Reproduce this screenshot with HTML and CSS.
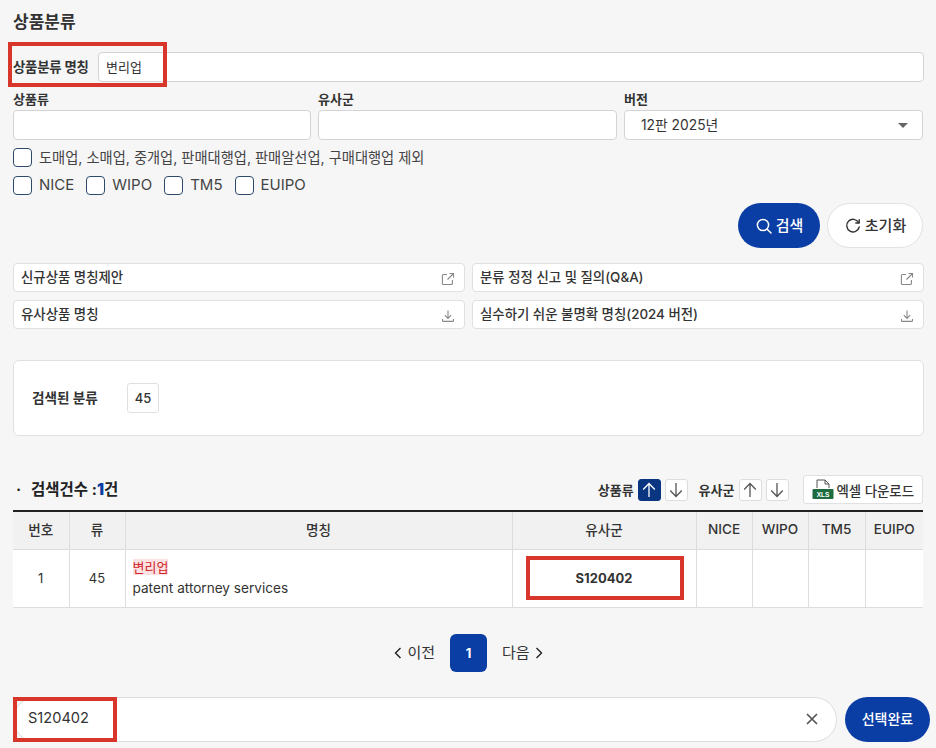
FILE: index.html
```html
<!DOCTYPE html>
<html lang="ko">
<head>
<meta charset="utf-8">
<title>상품분류</title>
<link rel="stylesheet" href="styles.css">
</head>
<body>
<main class="page">
  <h1 class="title">상품분류</h1>
  <div class="name-row">
    <label class="name-label">상품분류 명칭</label>
    <div class="field name-field">변리업</div>
  </div>
  <div class="filters">
    <div class="filter"><label class="flabel">상품류</label><div class="field"></div></div>
    <div class="filter"><label class="flabel">유사군</label><div class="field"></div></div>
    <div class="filter"><label class="flabel">버전</label>
      <div class="field select"><span>12판 2025년</span><i class="caret"></i></div></div>
  </div>
  <div class="check-row"><span class="box"></span><span class="check-text">도매업, 소매업, 중개업, 판매대행업, 판매알선업, 구매대행업 제외</span></div>
  <div class="check-row second">
    <span class="check"><span class="box"></span>NICE</span>
    <span class="check"><span class="box"></span>WIPO</span>
    <span class="check"><span class="box"></span>TM5</span>
    <span class="check"><span class="box"></span>EUIPO</span>
  </div>
  <div class="actions">
    <button class="pill primary">
      <svg width="18" height="18" viewBox="0 0 18 18" fill="none" stroke="#fff" stroke-width="1.5" stroke-linecap="round"><circle cx="8" cy="8" r="5.6"/><path d="M12.2 12.2 16 16"/></svg>검색</button>
    <button class="pill ghost">
      <svg width="18" height="18" viewBox="0 0 18 18" fill="none" stroke="#333" stroke-width="1.4" stroke-linecap="round"><path d="M14.6 5.6A6.3 6.3 0 1 0 15.2 10"/><path d="M15.2 2.6v3.4h-3.4" stroke-linejoin="round"/></svg>초기화</button>
  </div>
  <div class="links">
    <a class="link">신규상품 명칭제안<svg class="lic" width="14" height="14" viewBox="0 0 14 14" fill="none" stroke="#888" stroke-width="1.1"><path d="M6 2.5H2.4a1 1 0 0 0-1 1v8a1 1 0 0 0 1 1h8a1 1 0 0 0 1-1V8"/><path d="M6.5 7.5 12.5 1.5M8.5 1.5h4v4"/></svg></a>
    <a class="link">분류 정정 신고 및 질의(Q&amp;A)<svg class="lic" width="14" height="14" viewBox="0 0 14 14" fill="none" stroke="#888" stroke-width="1.1"><path d="M6 2.5H2.4a1 1 0 0 0-1 1v8a1 1 0 0 0 1 1h8a1 1 0 0 0 1-1V8"/><path d="M6.5 7.5 12.5 1.5M8.5 1.5h4v4"/></svg></a>
    <a class="link">유사상품 명칭<svg class="lic" width="14" height="14" viewBox="0 0 14 14" fill="none" stroke="#888" stroke-width="1.1"><path d="M7 1.5v7.6M3.8 6.2 7 9.4l3.2-3.2"/><path d="M1.5 10v1.4a1 1 0 0 0 1 1h9a1 1 0 0 0 1-1V10"/></svg></a>
    <a class="link">실수하기 쉬운 불명확 명칭(2024 버전)<svg class="lic" width="14" height="14" viewBox="0 0 14 14" fill="none" stroke="#888" stroke-width="1.1"><path d="M7 1.5v7.6M3.8 6.2 7 9.4l3.2-3.2"/><path d="M1.5 10v1.4a1 1 0 0 0 1 1h9a1 1 0 0 0 1-1V10"/></svg></a>
  </div>
  <section class="card">
    <strong class="card-label">검색된 분류</strong>
    <span class="chip">45</span>
  </section>
  <div class="result-head">
    <div class="count"><span class="dot">·</span>검색건수 :<b>1</b>건</div>
    <div class="sorts">
      <span class="sort-label">상품류</span>
      <span class="arrow on"><svg width="14" height="16" viewBox="0 0 14 16" fill="none" stroke="currentColor" stroke-width="1.3"><path d="M7 15V1.5M1.2 7.5 7 1.5l5.8 6"/></svg></span>
      <span class="arrow"><svg width="14" height="16" viewBox="0 0 14 16" fill="none" stroke="currentColor" stroke-width="1.3"><path d="M7 1v13.5M1.2 8.5 7 14.5l5.8-6"/></svg></span>
      <span class="sort-label gap">유사군</span>
      <span class="arrow"><svg width="14" height="16" viewBox="0 0 14 16" fill="none" stroke="currentColor" stroke-width="1.3"><path d="M7 15V1.5M1.2 7.5 7 1.5l5.8 6"/></svg></span>
      <span class="arrow"><svg width="14" height="16" viewBox="0 0 14 16" fill="none" stroke="currentColor" stroke-width="1.3"><path d="M7 1v13.5M1.2 8.5 7 14.5l5.8-6"/></svg></span>
      <span class="xls">
        <svg width="22" height="24" viewBox="0 0 22 24"><path d="M5 10V2h8l4 4v4" fill="#fff" stroke="#555" stroke-width="1"/><path d="M13 2v4h4" fill="none" stroke="#555" stroke-width="1"/><rect x="0.5" y="11" width="21" height="10" rx="1" fill="#1d6b3f"/><text x="11" y="19" class="xls-text" text-anchor="middle">XLS</text></svg>
        엑셀 다운로드</span>
    </div>
  </div>
  <table class="grid">
    <colgroup><col class="c1"><col class="c2"><col class="c3"><col class="c4"><col class="c5"><col class="c6"><col class="c7"><col class="c8"></colgroup>
    <thead><tr><th>번호</th><th>류</th><th>명칭</th><th>유사군</th><th>NICE</th><th>WIPO</th><th>TM5</th><th>EUIPO</th></tr></thead>
    <tbody><tr>
      <td>1</td><td>45</td>
      <td class="name"><mark>변리업</mark><br>patent attorney services</td>
      <td class="code">S120402</td><td></td><td></td><td></td><td></td>
    </tr></tbody>
  </table>
  <nav class="pager">
    <span class="pg"><svg width="8" height="12" viewBox="0 0 8 12" fill="none" stroke="#222" stroke-width="1.4"><path d="M6.5 1 1.5 6l5 5"/></svg>이전</span>
    <span class="pnum">1</span>
    <span class="pg">다음<svg width="8" height="12" viewBox="0 0 8 12" fill="none" stroke="#222" stroke-width="1.4"><path d="M1.5 1l5 5-5 5"/></svg></span>
  </nav>
  <div class="bottom">
    <div class="picked"><span>S120402</span>
      <svg width="12" height="12" viewBox="0 0 12 12" fill="none" stroke="#555" stroke-width="1.7"><path d="M1 1l10 10M11 1 1 11"/></svg></div>
    <button class="done">선택완료</button>
  </div>
</main>
<div class="mark m1"></div>
<div class="mark m2"></div>
<div class="mark m3"></div>
</body>
</html>
```
FILE: styles.css
```css
* { box-sizing: border-box; }
html, body { margin: 0; height: 100%; }
body {
  position: relative;
  overflow: hidden;
  background: #f6f6f7;
  color: #333;
  font-family: "Inter", "Noto Sans CJK KR", sans-serif;
  font-size: 13px;
}
.page { padding: 0 12px 0 13px; }
.title { margin: 0; padding-top: 12px; height: 52px; font-size: 17px; line-height: 20px; font-weight: 700; color: #333; }
.name-row { display: flex; align-items: center; height: 30px; }
.name-label { width: 85px; padding-bottom: 3px; font-size: 13.4px; font-weight: 700; white-space: nowrap; letter-spacing: -0.2px; }
.field {
  height: 30px;
  background: #fff;
  border: 1px solid #d4d4d6;
  border-radius: 4px;
  padding: 0 7px;
  line-height: 28px;
  font-size: 13px;
}
.name-field { flex: 1; }
.filters { display: grid; grid-template-columns: 298px 299px 299px; column-gap: 7px; margin-top: 9px; }
.flabel { display: block; height: 19px; font-size: 13px; line-height: 16px; font-weight: 700; }
.select { display: flex; justify-content: space-between; align-items: center; padding: 0 14px 0 16px; font-size: 13.8px; }
.caret { width: 0; height: 0; border-left: 5px solid transparent; border-right: 5px solid transparent; border-top: 5px solid #666; }
.check-row { display: flex; align-items: center; gap: 7px; height: 19px; margin-top: 8px; font-size: 14.25px; color: #444; }
.check-text { padding-bottom: 2px; }
.check-row.second { gap: 12px; margin-top: 9px; font-size: 15px; }
.check { display: flex; align-items: flex-start; gap: 7px; height: 19px; line-height: 17px; }
.box { width: 19px; height: 19px; background: #fff; border: 1px solid #2d4a6b; border-radius: 4px; flex: none; }
.actions { display: flex; justify-content: flex-end; gap: 7px; margin-top: 8px; margin-right: 1px; }
.pill {
  display: flex; align-items: center; justify-content: center; gap: 3px;
  height: 45px; border-radius: 23px; font: inherit; font-size: 15px; font-weight: 500; padding: 0 0 2px;
}
.pill svg { margin-top: 2px; }
.primary { width: 82px; background: #0a3ea4; color: #fff; border: 0; }
.ghost { width: 96px; background: #fff; color: #333; border: 1px solid #e2e2e4; }
.links { display: grid; grid-template-columns: 452px 452px; gap: 8px 7px; margin-top: 15px; }
.link {
  display: flex; justify-content: space-between; align-items: center;
  height: 29px; padding: 0 9px 3px 7px;
  background: #fff; border: 1px solid #e0e0e2; border-radius: 4px;
  font-size: 13.4px; font-weight: 500; color: #333;
}
.lic { flex: none; margin-top: 5px; }
.card {
  display: flex; align-items: center;
  height: 76px; margin-top: 31px; padding: 0 18px;
  background: #fff; border: 1px solid #e0e0e2; border-radius: 6px;
}
.card-label { width: 95px; padding-bottom: 2px; font-size: 13.6px; font-weight: 700; }
.chip {
  width: 32px; height: 30px; line-height: 28px; text-align: center;
  border: 1px solid #e0e0e2; border-radius: 3px; font-size: 13px; font-weight: 500;
}
.result-head { display: flex; justify-content: space-between; align-items: flex-end; height: 74px; padding-bottom: 6px; }
.count { font-size: 15.5px; font-weight: 700; color: #222; line-height: 29px; }
.count .dot { display: inline-block; width: 18px; padding-left: 3px; }
.count b { color: #0a3ea4; }
.sorts { display: flex; align-items: center; gap: 4px; margin-right: 1px; }
.sort-label { font-size: 13px; font-weight: 600; }
.sort-label.gap { margin-left: 7px; }
.arrow {
  display: flex; align-items: center; justify-content: center;
  width: 23px; height: 22px; background: #fff; color: #555;
  border: 1px solid #ddd; border-radius: 3px;
}
.arrow.on { background: #0a3580; color: #fff; border-color: #0a3580; }
.xls {
  display: flex; align-items: center; gap: 3px;
  height: 29px; margin-left: 10px; padding: 0 8px;
  background: #fff; border: 1px solid #e0e0e2; border-radius: 3px;
  font-size: 13.4px; font-weight: 500;
}
.xls-text { font: 700 6.5px "Liberation Sans", sans-serif; fill: #fff; }
.grid { width: 910px; table-layout: fixed; border-collapse: collapse; border-top: 2px solid #222; background: #fff; }
.c1, .c2 { width: 56px; }
.c3 { width: 387px; }
.c4 { width: 184px; }
.c5, .c6 { width: 56px; }
.c7 { width: 57px; }
.c8 { width: 58px; }
.grid th {
  height: 38px; padding: 0 0 2px; background: #f1f1f2;
  font-size: 13.6px; font-weight: 500; color: #333;
  border-left: 1px solid #ddd; border-bottom: 1px solid #ddd;
}
.grid td {
  height: 58px; padding: 0; text-align: center; font-size: 13px;
  border-left: 1px solid #ddd; border-bottom: 1px solid #ddd;
}
.grid th:first-child, .grid td:first-child { border-left: 0; }
.grid td.name { text-align: left; padding-left: 7px; line-height: 21px; font-size: 13.6px; }
mark { background: #fbe3e3; color: #d3232a; font-size: 13px; }
.grid td.code { font-weight: 700; }
.pager { display: flex; justify-content: center; align-items: center; gap: 15px; margin-top: 26px; height: 38px; }
.pg { display: flex; align-items: center; gap: 5px; padding-bottom: 2px; font-size: 15px; color: #333; }
.pg svg { margin-top: 2px; }
.pnum {
  width: 37px; height: 38px; line-height: 38px; text-align: center;
  background: #0a3ea4; color: #fff; border-radius: 6px; font-weight: 700; font-size: 13px;
}
.bottom { display: flex; gap: 8px; margin-top: 25px; margin-right: -7px; }
.picked {
  display: flex; justify-content: space-between; align-items: center;
  width: 824px; height: 45px; padding: 0 18px 2px 14px;
  background: #fff; border: 1px solid #ddd; border-radius: 23px; font-size: 14.6px;
}
.picked svg { margin-top: 2px; }
.done {
  width: 85px; height: 45px; background: #0a3ea4; color: #fff; border: 0; border-radius: 23px;
  font: inherit; font-size: 14px; font-weight: 500; padding: 0 0 2px;
}
.mark { position: absolute; border: 4px solid #d9362b; pointer-events: none; }
.m1 { left: 8px; top: 42px; width: 159px; height: 45px; }
.m2 { left: 526px; top: 556px; width: 158px; height: 44px; }
.m3 { left: 13px; top: 697px; width: 104px; height: 45px; }
```
